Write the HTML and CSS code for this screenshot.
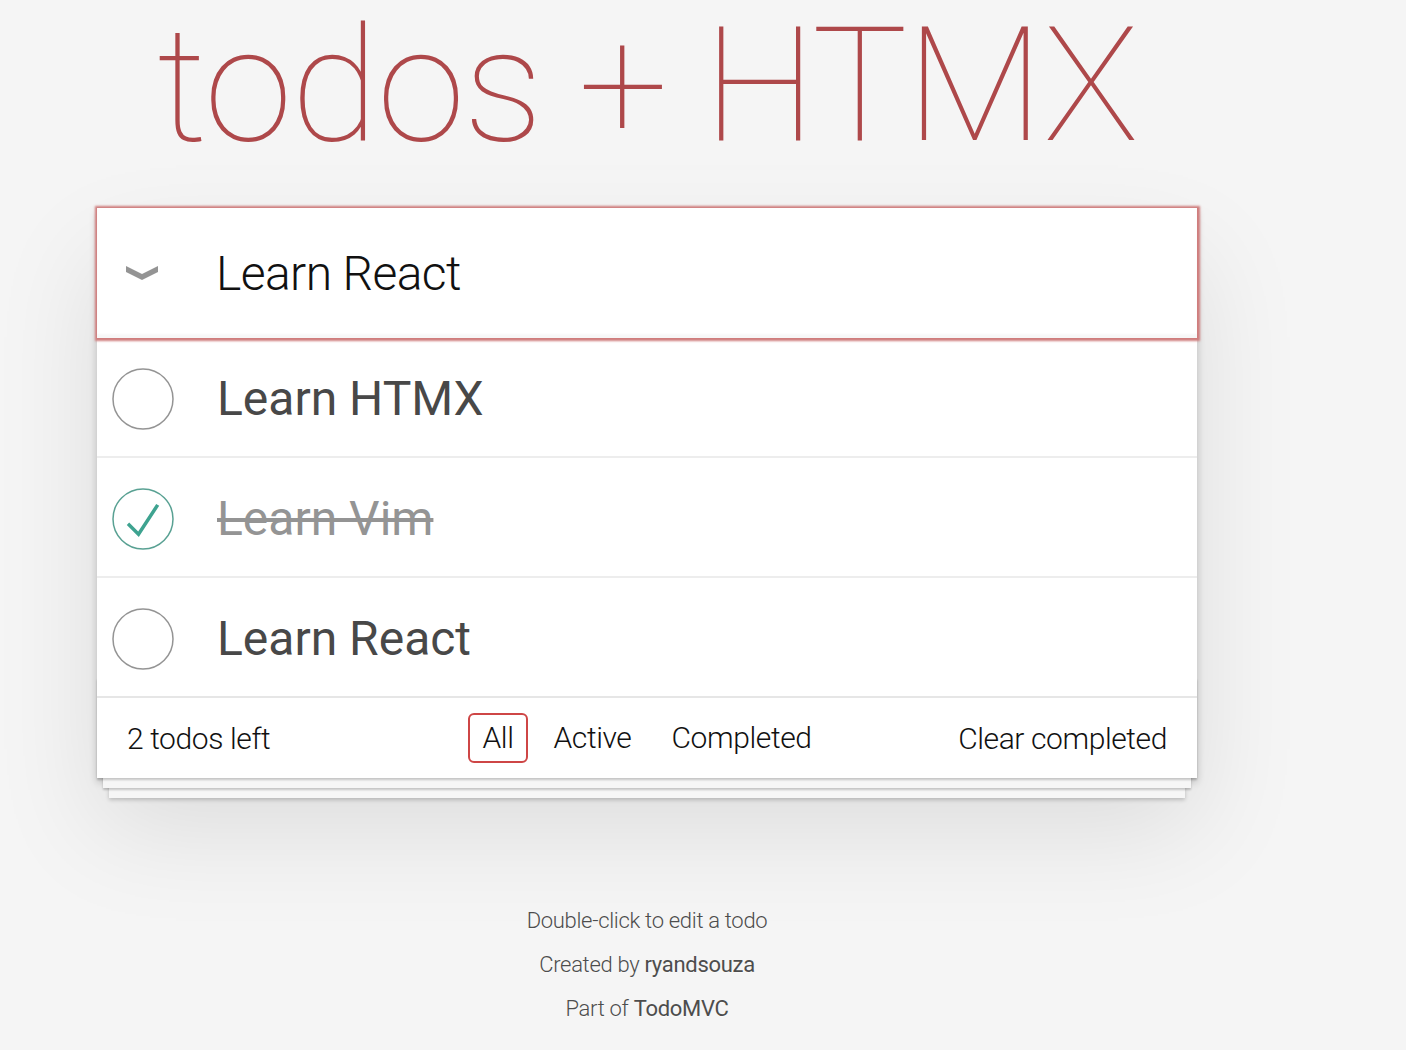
FILE: index.html
```html
<!DOCTYPE html>
<html lang="en">
<head>
    <meta charset="UTF-8">
    <meta name="viewport" content="width=device-width, initial-scale=1.0">
    <title>todos + HTMX</title>
    <link rel="stylesheet" href="styles.css">
</head>
<body>
    <div class="page">
        <h1 class="title">todos + HTMX</h1>

        <section class="todoapp">
            <header class="new-todo-row">
                <svg class="toggle-all" width="33" height="16" viewBox="0 0 33 16">
                    <polygon points="0,1 16,9 32,1 32,7 16,15 0,7" fill="#949494"/>
                </svg>
                <input class="new-todo" type="text" value="Learn React" autocomplete="off">
            </header>

            <ul class="todo-list">
                <li class="todo">
                    <svg class="toggle" width="62" height="62" viewBox="0 0 62 62">
                        <circle cx="31" cy="31" r="30" fill="none" stroke="#949494" stroke-width="1.5"/>
                    </svg>
                    <label>Learn HTMX</label>
                </li>
                <li class="todo completed">
                    <svg class="toggle" width="62" height="62" viewBox="0 0 62 62">
                        <circle cx="31" cy="31" r="30" fill="none" stroke="#59a193" stroke-width="1.5"/>
                        <path transform="translate(1 1) scale(0.6)" fill="#3ea390" d="M72 25L42 71 27 56l-4 4 20 20 34-52z"/>
                    </svg>
                    <label>Learn Vim</label>
                </li>
                <li class="todo">
                    <svg class="toggle" width="62" height="62" viewBox="0 0 62 62">
                        <circle cx="31" cy="31" r="30" fill="none" stroke="#949494" stroke-width="1.5"/>
                    </svg>
                    <label>Learn React</label>
                </li>
            </ul>

            <footer class="footer">
                <span class="todo-count">2 todos left</span>
                <ul class="filters">
                    <li><a class="selected" href="#/">All</a></li>
                    <li><a href="#/active">Active</a></li>
                    <li><a href="#/completed">Completed</a></li>
                </ul>
                <button class="clear-completed">Clear completed</button>
            </footer>
        </section>

        <footer class="info">
            <p>Double-click to edit a todo</p>
            <p>Created by <a href="#">ryandsouza</a></p>
            <p>Part of <a href="#">TodoMVC</a></p>
        </footer>
    </div>
</body>
</html>
```

FILE: styles.css
```css
:root {
    --accent: #ae484a;
    --text-color: #111;
    --item-color: #484848;
    --muted: #949494;
}

body {
    font-family: Roboto, "Helvetica Neue", Helvetica, Arial, sans-serif;
    font-weight: 300;
    margin: 0;
    padding: 0;
    background-color: #f5f5f5;
    color: var(--text-color);
}

.page {
    width: 1100px;
    margin-left: 97px;
}

.title {
    margin: 6px 0 0;
    font-size: 160px;
    line-height: 160px;
    font-weight: 100;
    letter-spacing: -1.5px;
    text-align: center;
    color: var(--accent);
}

.todoapp {
    margin-top: 42px;
    background: #fff;
    position: relative;
    box-shadow: 0 4px 8px 0 rgba(0, 0, 0, 0.2), 0 50px 100px 0 rgba(0, 0, 0, 0.1);
}

.new-todo-row {
    display: flex;
    align-items: center;
    height: 130px;
    position: relative;
    z-index: 1;
    box-shadow: 0 0 2px 2.5px #cf7d7d, inset 0 -4px 2px rgba(0, 0, 0, 0.03);
}

.toggle-all {
    margin-left: 29px;
    flex: none;
}

.new-todo {
    flex: 1;
    border: none;
    outline: none;
    background: transparent;
    padding: 0 32px 0 57px;
    font-family: inherit;
    font-weight: 300;
    font-size: 48px;
    letter-spacing: -0.6px;
    color: var(--text-color);
}

.todo-list {
    list-style: none;
    margin: 0;
    padding: 0;
}

.todo {
    display: flex;
    align-items: center;
    box-sizing: border-box;
    height: 120px;
    padding-top: 3px;
    border-bottom: 2px solid #ededed;
}

.todo:last-child {
    border-bottom: none;
    height: 118px;
}

.toggle {
    flex: none;
    margin-left: 15px;
}

.todo label {
    padding-left: 43px;
    font-size: 48px;
    font-weight: 400;
    color: var(--item-color);
}

.todo.completed label {
    color: var(--muted);
    text-decoration: line-through;
}

.footer {
    position: relative;
    display: grid;
    grid-template-columns: 1fr auto 1fr;
    align-items: center;
    padding: 15px 30px;
    border-top: 2px solid #e6e6e6;
    font-size: 30px;
}

.footer::before {
    content: '';
    position: absolute;
    left: 0;
    right: 0;
    bottom: 0;
    height: 100px;
    overflow: hidden;
    box-shadow: 0 2px 2px rgba(0, 0, 0, 0.2),
        0 16px 0 -6px #f6f6f6,
        0 18px 2px -6px rgba(0, 0, 0, 0.2),
        0 32px 0 -12px #f6f6f6,
        0 34px 4px -12px rgba(0, 0, 0, 0.2);
}

.todo-count {
    position: relative;
    letter-spacing: -0.4px;
}

.filters {
    position: relative;
    display: flex;
    list-style: none;
    margin: 0;
    padding: 0;
}

.filters a {
    display: block;
    margin: 0 6px;
    padding: 6px 12px;
    line-height: 34px;
    border: 2px solid transparent;
    border-radius: 6px;
    color: inherit;
    text-decoration: none;
    letter-spacing: -0.4px;
}

.filters a.selected {
    border-color: #ce4646;
}

.clear-completed {
    position: relative;
    justify-self: end;
    background: none;
    border: none;
    padding: 0;
    font-family: inherit;
    font-weight: 300;
    font-size: 30px;
    letter-spacing: -0.4px;
    color: inherit;
    cursor: pointer;
}

.info {
    margin-top: 132px;
    color: #4d4d4d;
    font-size: 22px;
    letter-spacing: -0.3px;
    text-align: center;
    text-shadow: 0 1px 0 rgba(255, 255, 255, 0.5);
}

.info p {
    line-height: 1;
    margin: 0 0 22px;
}

.info a {
    color: inherit;
    text-decoration: none;
    font-weight: 400;
}
```
